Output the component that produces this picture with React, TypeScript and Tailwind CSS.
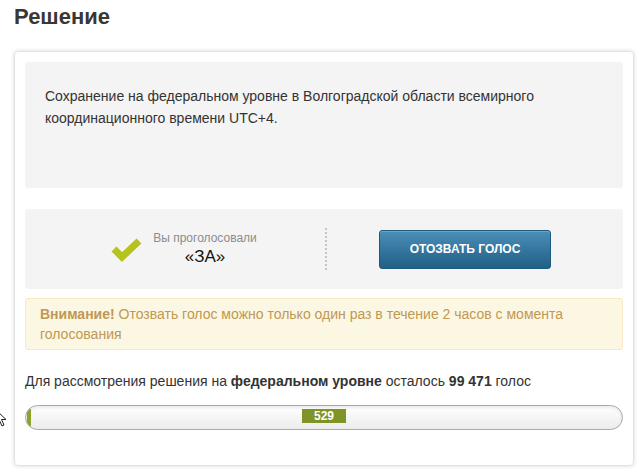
import React from 'react';

const font = { fontFamily: '"Liberation Sans", Arial, sans-serif' };

function CheckMark() {
  return (
    <svg width="32" height="26" viewBox="0 0 32 26" className="shrink-0">
      <polyline
        points="3,13 11,21 28,5"
        fill="none"
        stroke="#b5c31c"
        strokeWidth="7"
        strokeLinecap="butt"
        strokeLinejoin="miter"
      />
    </svg>
  );
}

function Progress({ value }: { value: number }) {
  return (
    <div className="relative h-[25px] rounded-full border border-[#a9a9a9] bg-gradient-to-b from-white to-[#ececec] shadow-[inset_0_2px_3px_rgba(0,0,0,0.08)] overflow-hidden">
      <div className="absolute left-[1px] top-[3px] bottom-[3px] w-[4px] rounded-l-full bg-[#8aa52a]" />
      <div className="absolute left-1/2 top-[3px] -translate-x-1/2 w-[44px] h-[14px] bg-[#7f9427] text-white text-[12px] font-bold leading-[14px] text-center">
        {value}
      </div>
    </div>
  );
}

export default function App() {
  return (
    <div className="relative w-[638px] h-[472px] bg-white overflow-hidden px-[14px] text-[#333]" style={font}>
      <h1 className="pt-[3px] text-[22px] leading-[28px] font-bold text-[#3a3633]">Решение</h1>

      <div className="mt-[20px] rounded-[4px] border border-[#e2e2e2] shadow-[0_0_4px_rgba(0,0,0,0.15)] p-[10px] pb-[35px] w-[620px]">
        <div className="h-[126px] rounded-[3px] bg-[#f4f4f4] px-[20px] pt-[23px] text-[14px] leading-[22px] text-[#333]">
          Сохранение на федеральном уровне в Волгоградской области всемирного координационного времени UTC+4.
        </div>

        <div className="mt-[21px] h-[80px] rounded-[3px] bg-[#f4f4f4] flex items-center">
          <div className="w-[300px] flex justify-center items-center gap-[10px] pl-[18px]">
            <CheckMark />
            <div className="text-center">
              <div className="text-[12px] leading-[16px] text-[#8c8c8c]">Вы проголосовали</div>
              <div className="text-[17px] leading-[22px] text-[#111]">«ЗА»</div>
            </div>
          </div>
          <div className="h-[42px] border-l-2 border-dotted border-[#c4c4c4]" />
          <div className="flex-1 flex justify-center pr-[20px]">
            <button className="w-[172px] h-[39px] rounded-[3px] border border-[#1e5a7d] bg-gradient-to-b from-[#4a8fb8] to-[#215f86] text-white text-[12px] font-bold uppercase shadow-[inset_0_1px_0_rgba(255,255,255,0.2)]">
              Отозвать голос
            </button>
          </div>
        </div>

        <div className="mt-[9px] rounded-[3px] border border-[#f7e8c6] bg-[#fcf7e3] px-[14px] pt-[5px] pb-[5px] text-[14px] leading-[20px] text-[#c09853]">
          <b>Внимание!</b> Отозвать голос можно только один раз в течение 2 часов с момента голосования
        </div>

        <div className="mt-[21px] text-[14px] leading-[20px] text-[#333]">
          Для рассмотрения решения на <b>федеральном уровне</b> осталось <b>99 471</b> голос
        </div>

        <div className="mt-[14px]">
          <Progress value={529} />
        </div>
      </div>

      <svg className="absolute left-[-5px] top-[409px]" width="14" height="20" viewBox="0 0 14 20">
        <path d="M1 1 L1 15 L4.5 11.5 L7 17 L9 16 L6.5 10.5 L11 10.5 Z" fill="white" stroke="#222" strokeWidth="1" />
      </svg>
    </div>
  );
}
